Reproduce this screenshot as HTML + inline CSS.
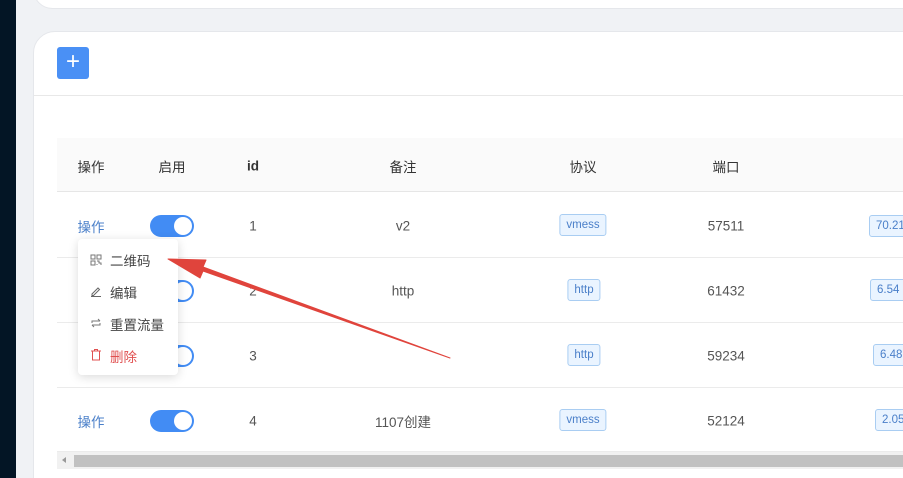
<!DOCTYPE html>
<html><head><meta charset="utf-8"><style>
*{margin:0;padding:0;box-sizing:border-box}
html,body{width:903px;height:478px;overflow:hidden}
body{background:#f0f2f5;position:relative;font-family:"Liberation Sans","Noto Sans CJK SC",sans-serif;font-size:13.5px;color:#555}
.a{position:absolute;white-space:nowrap}
.c{position:absolute;transform:translate(-50%,-50%);white-space:nowrap}
.tag,.tagl{position:absolute;border:1px solid #a9cdf2;background:#eaf4ff;color:#4a7fc9;border-radius:3px;font-family:"Liberation Sans",sans-serif;font-size:11.5px;padding:0 6px;height:22px;white-space:nowrap}
.tag span,.tagl span{position:relative;top:4px;display:block;line-height:13px}
.tag{transform:translate(-50%,-50%)}
.tagl{transform:translateY(-50%)}
.sw{position:absolute;width:44px;height:22px;border-radius:11px;background:#428cf4}
.sw:after{content:"";position:absolute;right:2px;top:2px;width:18px;height:18px;border-radius:50%;background:#fff}
.hl{position:absolute;left:57px;right:0;height:1px;background:#ebebeb}
</style></head><body>
<div class="a" style="left:0;top:0;width:16px;height:478px;background:#031525"></div>
<div class="a" style="left:33px;top:-30px;width:900px;height:39px;background:#fff;border-radius:20px;border:1px solid #e5e7eb"></div>
<div class="a" style="left:33px;top:31px;width:900px;height:470px;background:#fff;border-radius:22px;border:1px solid #e5e7eb"></div>
<div class="a" style="left:57px;top:47px;width:32px;height:32px;background:#4a90f5;border-radius:3px;color:#fff;font-size:24px;line-height:30px;text-align:center">+</div>
<div class="a" style="left:34px;top:95px;right:0;height:1px;background:#e8e8e8"></div>
<div class="a" style="left:57px;top:138px;right:0;height:54px;background:#fafafa;border-bottom:1px solid #e6e6e6"></div>
<div class="c" style="left:91px;top:166px;color:#333">操作</div>
<div class="c" style="left:172px;top:166px;color:#333">启用</div>
<div class="c" style="left:253px;top:166px;color:#333;font-weight:bold">id</div>
<div class="c" style="left:403px;top:166px;color:#333">备注</div>
<div class="c" style="left:583px;top:166px;color:#333">协议</div>
<div class="c" style="left:726px;top:166px;color:#333">端口</div>
<div class="hl" style="top:257px"></div><div class="hl" style="top:322px"></div><div class="hl" style="top:387px"></div>
<div class="hl" style="top:451px"></div>

<div class="c" style="left:91px;top:226px;color:#4a7fc9">操作</div>
<div class="sw" style="left:150px;top:215px"></div>
<div class="c" style="left:253px;top:226px">1</div>
<div class="c" style="left:403px;top:226px">v2</div>
<div class="tag" style="left:583px;top:225px"><span>vmess</span></div>
<div class="c" style="left:726px;top:226px">57511</div>
<div class="tagl" style="left:869px;top:226px"><span>70.21 GB</span></div>

<div class="sw" style="left:150px;top:280px"></div>
<div class="c" style="left:253px;top:291px">2</div>
<div class="c" style="left:403px;top:291px">http</div>
<div class="tag" style="left:584px;top:290px"><span>http</span></div>
<div class="c" style="left:726px;top:291px">61432</div>
<div class="tagl" style="left:870px;top:290px"><span>6.54 GB</span></div>

<div class="sw" style="left:150px;top:345px"></div>
<div class="c" style="left:253px;top:356px">3</div>
<div class="tag" style="left:584px;top:355px"><span>http</span></div>
<div class="c" style="left:726px;top:356px">59234</div>
<div class="tagl" style="left:873px;top:355px"><span>6.48 GB</span></div>

<div class="c" style="left:91px;top:421px;color:#4a7fc9">操作</div>
<div class="sw" style="left:150px;top:410px"></div>
<div class="c" style="left:253px;top:421px">4</div>
<div class="c" style="left:403px;top:421px">1107创建</div>
<div class="tag" style="left:583px;top:420px"><span>vmess</span></div>
<div class="c" style="left:726px;top:421px">52124</div>
<div class="tagl" style="left:875px;top:420px"><span>2.05 GB</span></div>

<div class="a" style="left:57px;top:452px;right:0;height:17px;background:#f1f1f1"></div>
<div class="a" style="left:62px;top:457px;width:0;height:0;border-top:3px solid transparent;border-bottom:3px solid transparent;border-right:4px solid #999"></div>
<div class="a" style="left:74px;top:455px;right:0;height:12px;background:#c1c1c1"></div>

<div class="a" style="left:78px;top:239px;width:100px;height:136px;background:#fff;border-radius:4px;box-shadow:0 2px 10px rgba(0,0,0,.15)"></div>
<svg class="a" style="left:90px;top:254px" width="12" height="12" viewBox="0 0 12 12" fill="none" stroke="#777" stroke-width="1"><rect x="1" y="1" width="4" height="4"/><rect x="7" y="1" width="4" height="4"/><rect x="1" y="7" width="4" height="4"/><path d="M7 7h2v2h2v2M7 10v1"/></svg>
<div class="a" style="left:110px;top:250px;color:#444">二维码</div>
<svg class="a" style="left:90px;top:285px" width="12" height="12" viewBox="0 0 12 12" fill="none" stroke="#666" stroke-width="1"><path d="M2 9l6-6 1.5 1.5-6 6H2zM1 11.5h10"/></svg>
<div class="a" style="left:110px;top:282px;color:#444">编辑</div>
<svg class="a" style="left:90px;top:317px" width="12" height="12" viewBox="0 0 12 12" fill="none" stroke="#777" stroke-width="1"><path d="M2 6V4h8M8 2l2 2M10 6v2H2M4 10L2 8"/></svg>
<div class="a" style="left:110px;top:314px;color:#444">重置流量</div>
<svg class="a" style="left:90px;top:348px" width="12" height="13" viewBox="0 0 12 13" fill="none" stroke="#e05050" stroke-width="1"><path d="M1 3h10M4.5 3V1.5h3V3M2.5 3v9h7V3"/></svg>
<div class="a" style="left:110px;top:346px;color:#e05050">删除</div>

<svg class="a" style="left:0;top:0" width="903" height="478"><path d="M450 358 L203 271 L200 278 L168 259 L206 260 L203 267 Z" fill="#e0443c" stroke="#e0443c" stroke-width="1" stroke-linejoin="round"/></svg>
</body></html>
